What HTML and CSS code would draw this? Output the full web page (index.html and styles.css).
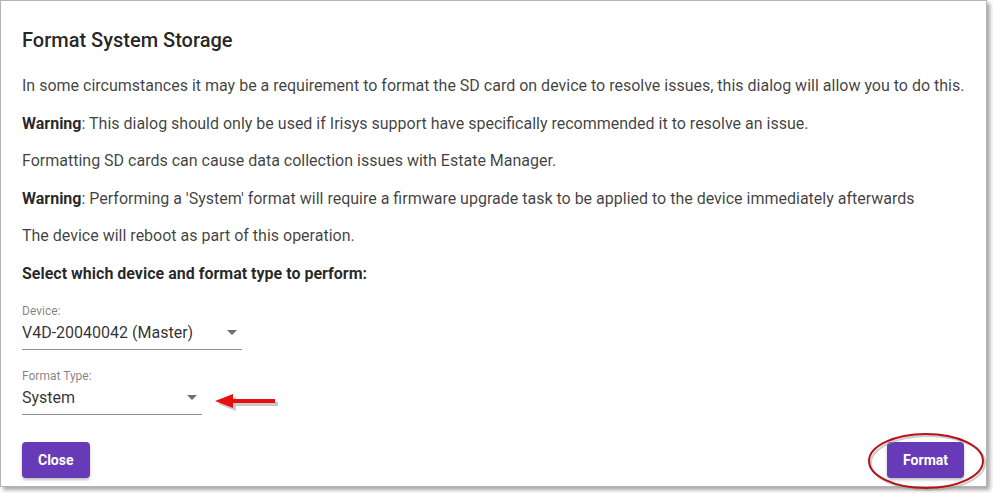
FILE: index.html
```html
<!DOCTYPE html>
<html>
<head>
<meta charset="utf-8">
<link rel="stylesheet" href="styles.css">
</head>
<body>
<div class="dialog">
  <h2 class="title">Format System Storage</h2>
  <p class="text">In some circumstances it may be a requirement to format the SD card on device to resolve issues, this dialog will allow you to do this.</p>
  <p class="text"><b>Warning</b>: This dialog should only be used if Irisys support have specifically recommended it to resolve an issue.</p>
  <p class="text">Formatting SD cards can cause data collection issues with Estate Manager.</p>
  <p class="text"><b>Warning</b>: Performing a 'System' format will require a firmware upgrade task to be applied to the device immediately afterwards</p>
  <p class="text">The device will reboot as part of this operation.</p>
  <p class="text strong">Select which device and format type to perform:</p>

  <div class="field field-device">
    <div class="label">Device:</div>
    <div class="select"><span>V4D-20040042 (Master)</span><span class="caret"></span></div>
  </div>
  <div class="field field-type">
    <div class="label">Format Type:</div>
    <div class="select"><span>System</span><span class="caret"></span></div>
    <svg class="arrow" width="70" height="24" viewBox="0 0 70 24">
      <g transform="translate(3,3)" fill="#888" opacity="0.45">
        <polygon points="0,9 18,2 18,7 60,7 60,11 18,11 18,16"/>
      </g>
      <polygon points="0,9 18,2 18,7 60,7 60,11 18,11 18,16" fill="#e8100f"/>
    </svg>
  </div>

  <div class="actions">
    <button class="btn">Close</button>
    <button class="btn">Format</button>
  </div>
  <svg class="ring" width="124" height="62" viewBox="0 0 124 62">
    <ellipse cx="61" cy="30" rx="57" ry="27" fill="none" stroke="#999" stroke-width="2" opacity="0.5" transform="translate(2,2)"/>
    <ellipse cx="61" cy="30" rx="57" ry="27" fill="none" stroke="#b5121b" stroke-width="2"/>
  </svg>
</div>
</body>
</html>
```

FILE: styles.css
```css
html, body {
  margin: 0;
  padding: 0;
  background: #ffffff;
}
body {
  font-family: Roboto, "Liberation Sans", Arial, sans-serif;
  width: 993px;
  height: 493px;
  overflow: hidden;
}
.dialog {
  position: relative;
  box-sizing: border-box;
  width: 987px;
  height: 487px;
  border: 1px solid #b4b4b4;
  box-shadow: 3px 3px 4px rgba(0, 0, 0, 0.35);
  background: #fff;
  padding: 26px 21px 8px 21px;
  display: flex;
  flex-direction: column;
  color: rgba(0, 0, 0, 0.76);
}
.title {
  margin: 0 0 19px 0;
  font-size: 20px;
  line-height: 28px;
  font-weight: 500;
  color: rgba(0, 0, 0, 0.87);
  position: relative;
  top: -1px;
}
.text {
  margin: 0 0 13.6px 0;
  font-size: 16px;
  line-height: 24px;
  white-space: nowrap;
}
.text b, .strong {
  font-weight: 700;
  color: rgba(0, 0, 0, 0.85);
}
.text.strong {
  margin-bottom: 0;
}
.field {
  position: relative;
  display: flex;
  flex-direction: column;
}
.field-device {
  margin-top: 17px;
  width: 220px;
}
.field-type {
  margin-top: 18px;
  width: 180px;
}
.label {
  font-size: 12px;
  line-height: 16px;
  color: rgba(0, 0, 0, 0.5);
  margin-bottom: 2px;
}
.select {
  display: flex;
  align-items: center;
  justify-content: space-between;
  font-size: 16px;
  line-height: 24px;
  padding-bottom: 4px;
  border-bottom: 1px solid #8f8f8f;
  color: rgba(0, 0, 0, 0.82);
}
.caret {
  width: 0;
  height: 0;
  border-left: 5px solid transparent;
  border-right: 5px solid transparent;
  border-top: 5px solid #6f6f6f;
  margin-right: 5px;
}
.arrow {
  position: absolute;
  left: 193px;
  top: 24px;
}
.actions {
  margin-top: auto;
  display: flex;
  justify-content: space-between;
  padding-right: 1px;
}
.btn {
  height: 36px;
  padding: 0 16px;
  border: none;
  border-radius: 4px;
  background: #673ab7;
  color: #fff;
  font-family: Roboto, "Liberation Sans", Arial, sans-serif;
  font-size: 14px;
  font-weight: 700;
  box-shadow: 0 2px 3px rgba(0, 0, 0, 0.25);
}
.ring {
  position: absolute;
  left: 864px;
  top: 430px;
}
```
